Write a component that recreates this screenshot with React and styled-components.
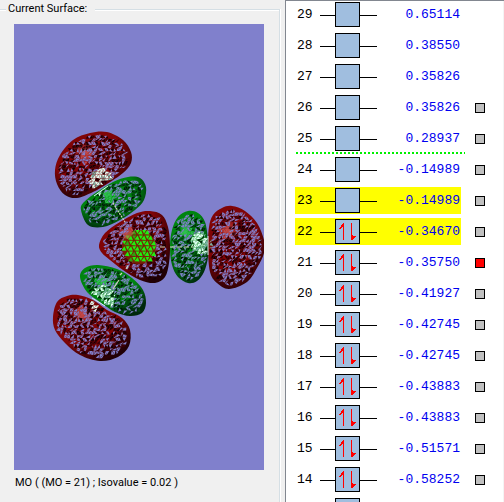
import React, { useState } from 'react'
import styled, { createGlobalStyle } from 'styled-components'

const GlobalStyle = createGlobalStyle`
  * {
    box-sizing: border-box;
  }
  body {
    margin: 0;
    background: #f0f0f0;
    font-family: Roboto, "Liberation Sans", Arial, sans-serif;
    color: #000;
  }
`

const orbitals = [
  { mo: 29, energy: '0.65114' },
  { mo: 28, energy: '0.38550' },
  { mo: 27, energy: '0.35826' },
  { mo: 26, energy: '0.35826', surface: true },
  { mo: 25, energy: '0.28937', surface: true },
  { mo: 24, energy: '-0.14989', surface: true },
  { mo: 23, energy: '-0.14989', surface: true, marked: true },
  { mo: 22, energy: '-0.34670', surface: true, marked: true, filled: true },
  { mo: 21, energy: '-0.35750', surface: true, filled: true },
  { mo: 20, energy: '-0.41927', surface: true, filled: true },
  { mo: 19, energy: '-0.42745', surface: true, filled: true },
  { mo: 18, energy: '-0.42745', surface: true, filled: true },
  { mo: 17, energy: '-0.43883', surface: true, filled: true },
  { mo: 16, energy: '-0.43883', surface: true, filled: true },
  { mo: 15, energy: '-0.51571', surface: true, filled: true },
  { mo: 14, energy: '-0.58252', surface: true, filled: true },
]

// outline points of every lobe, light is where the mesh gets bright
const lobes = [
  {
    id: 'topRed', color: 'red', light: [101, 180, 11], shine: [86, 157],
    points: [[55, 170], [60, 155], [73, 140], [90, 133], [107, 132], [123, 140], [131, 152], [131, 163], [123, 173], [107, 184], [93, 192], [77, 198], [65, 195], [57, 184]],
  },
  {
    id: 'topGreen', color: 'green', light: [98, 191, 5], shine: [109, 198],
    points: [[81, 210], [84, 202], [97, 192], [113, 182], [128, 177], [140, 178], [146, 187], [144, 200], [135, 210], [120, 220], [103, 227], [88, 225]],
  },
  {
    id: 'bottomGreen', color: 'green', light: [103, 298, 12], shine: [101, 282],
    points: [[80, 277], [85, 268], [98, 265], [117, 269], [132, 278], [143, 290], [146, 303], [142, 313], [130, 316], [115, 312], [100, 302], [87, 292]],
  },
  {
    id: 'bottomRed', color: 'red', light: [97, 305, 7], shine: [81, 312],
    points: [[53, 317], [57, 302], [67, 296], [78, 295], [93, 300], [107, 310], [122, 318], [130, 330], [129, 346], [118, 357], [100, 361], [80, 355], [65, 343], [55, 330]],
  },
  {
    id: 'rightGreen', color: 'green', light: [202, 243, 11], shine: [187, 232],
    points: [[170, 247], [172, 230], [178, 217], [188, 211], [198, 213], [205, 222], [208, 240], [208, 257], [204, 272], [197, 281], [188, 283], [178, 277], [172, 265]],
  },
  {
    id: 'rightRed', color: 'red', light: [209, 245, 5], shine: [225, 232],
    points: [[208, 247], [209, 227], [213, 215], [222, 208], [232, 206], [245, 211], [257, 223], [264, 240], [264, 253], [257, 268], [247, 282], [229, 289], [217, 283], [210, 272]],
  },
  {
    id: 'centerRed', color: 'red', light: [0, 0, 0], shine: [130, 234],
    points: [[99, 245], [105, 233], [120, 222], [137, 213], [150, 211], [162, 215], [168, 227], [170, 245], [169, 263], [165, 277], [155, 283], [140, 280], [123, 270], [110, 260], [102, 253]],
  },
]

const shades = {
  red: ['#c04848', '#800406', '#200006', '#3c0008', '#100006'],
  green: ['#30c050', '#008410', '#00280c', '#00440e', '#001408'],
}

// small seeded generator so the mesh is the same on every render
const createRandom = (seed) => () => {
  seed = (seed * 1664525 + 1013904223) % 4294967296
  return seed / 4294967296
}

const smoothPath = (points) => {
  const n = points.length
  let d = `M${points[0]}`
  for (let i = 0; i < n; i++) {
    const a = points[(i + n - 1) % n]
    const b = points[i]
    const c = points[(i + 1) % n]
    const e = points[(i + 2) % n]
    d += `C${b[0] + (c[0] - a[0]) / 6},${b[1] + (c[1] - a[1]) / 6} ${c[0] - (e[0] - b[0]) / 6},${c[1] - (e[1] - b[1]) / 6} ${c}`
  }
  return d + 'Z'
}

const isInside = (x, y, points) => {
  let inside = false
  for (let i = 0, j = points.length - 1; i < points.length; j = i++) {
    const [xi, yi] = points[i]
    const [xj, yj] = points[j]
    if (yi > y !== yj > y && x < ((xj - xi) * (y - yi)) / (yj - yi) + xi) inside = !inside
  }
  return inside
}

const buildMesh = (lobe, seed) => {
  const random = createRandom(seed)
  const [bright, , dark, mid, darkest] = shades[lobe.color]
  const xs = lobe.points.map((p) => p[0])
  const ys = lobe.points.map((p) => p[1])
  const x0 = Math.min(...xs)
  const y0 = Math.min(...ys)
  const cx = (x0 + Math.max(...xs)) / 2
  const cy = (y0 + Math.max(...ys)) / 2
  const step = 3.3
  const cols = Math.ceil((Math.max(...xs) - x0) / step) + 2
  const rows = Math.ceil((Math.max(...ys) - y0) / step) + 2
  const grid = []
  for (let r = 0; r <= rows; r++) {
    grid.push([])
    for (let c = 0; c <= cols; c++) {
      grid[r].push([
        x0 + (c + (r % 2) / 2 - 1) * step + (random() - 0.5) * 1.8,
        y0 + (r - 1) * step + (random() - 0.5) * 1.8,
      ])
    }
  }
  const triangles = []
  for (let r = 0; r < rows; r++) {
    for (let c = 0; c < cols; c++) {
      const pairs = [
        [grid[r][c], grid[r][c + 1], grid[r + 1][c]],
        [grid[r][c + 1], grid[r + 1][c + 1], grid[r + 1][c]],
      ]
      pairs.forEach((tri) => {
        const mx = (tri[0][0] + tri[1][0] + tri[2][0]) / 3
        const my = (tri[0][1] + tri[1][1] + tri[2][1]) / 3
        const pick = random()
        // keep a solid rim round the lobe
        const ex = cx + (mx - cx) * 1.1
        const ey = cy + (my - cy) * 1.1
        if (!isInside(ex, ey, lobe.points)) return
        const [lx, ly, lr] = lobe.light
        const lit = Math.hypot(mx - lx, my - ly) < lr
        const shiny = Math.hypot(mx - lobe.shine[0], my - lobe.shine[1]) < 6
        let fill = pick < 0.48 ? '#8080cc' : pick < 0.66 ? dark : pick < 0.8 ? darkest : pick < 0.92 ? mid : null
        if (shiny && pick > 0.4) fill = bright
        if (lit) fill = pick < 0.6 ? '#e0fff4' : pick < 0.8 ? '#78b0a4' : dark
        if (!fill) return
        const size = lit ? 0.9 : 0.84
        const points = tri
          .map(([x, y]) => `${(mx + (x - mx) * size).toFixed(1)},${(my + (y - my) * size).toFixed(1)}`)
          .join(' ')
        triangles.push({ points, fill })
      })
    }
  }
  return triangles
}

const meshes = lobes.map((lobe, index) => ({
  ...lobe,
  outline: smoothPath(lobe.points),
  triangles: buildMesh(lobe, 41 + index * 97),
}))

const coreTriangles = []
for (let r = 0; r < 7; r++) {
  for (let c = 0; c < 7; c++) {
    const x = 118 + c * 6.6 + (r % 2) * 3.3
    const y = 230 + r * 5.4
    if (Math.hypot(x + 2.5 - 139, y + 2 - 247) < 17) coreTriangles.push(`${x},${y + 4.2} ${x + 5},${y + 4.6} ${x + 3.2},${y}`)
    if (Math.hypot(x + 6 - 139, y + 2 - 247) < 16) coreTriangles.push(`${x + 4.4},${y} ${x + 8.4},${y} ${x + 6.2},${y + 3.8}`)
  }
}

function Surface() {
  return (
    <Viewport viewBox="14 24 250 446" role="img" aria-label="Molecular orbital 21">
      <defs>
        {Object.entries(shades).map(([name, [bright, base, dark]]) => (
          <radialGradient key={name} id={`${name}Shade`} cx="0.38" cy="0.3" r="0.75">
            <stop offset="0" stopColor={bright} />
            <stop offset="0.2" stopColor={base} />
            <stop offset="0.6" stopColor={base} />
            <stop offset="1" stopColor={dark} />
          </radialGradient>
        ))}
      </defs>
      {meshes.map((lobe) => (
        <g key={lobe.id}>
          <path d={lobe.outline} fill={`url(#${lobe.color}Shade)`} />
          {lobe.triangles.map((tri, i) => (
            <polygon key={i} points={tri.points} fill={tri.fill} />
          ))}
        </g>
      ))}
      <circle cx="139" cy="247" r="17" fill="#782008" />
      {coreTriangles.map((points, i) => (
        <polygon key={i} points={points} fill={i % 7 === 0 ? '#30a010' : '#20f010'} />
      ))}
      <path d="M123 238l7-6 5 0-7 7z" fill="#c07050" opacity="0.6" />
      <g fill="none" stroke="#d0d8b8" strokeWidth="1.2">
        <path d="M113 203L125 222" strokeDasharray="2 1" />
        <path d="M160 247H166M170 247H193" strokeDasharray="5 2" />
        <path d="M128 266L126 269M122 273L120 275M119 280L113 289" />
      </g>
      <path d="M94 196L108 186M92 298L105 306M208 236V255" stroke="#d8f4f0" fill="none" />
    </Viewport>
  )
}

function Electrons() {
  return (
    <svg width="23" height="23" viewBox="0 0 23 23" aria-hidden="true" shapeRendering="crispEdges">
      <path d="M7 3h1v17h-1zM15 3h1v17h-1z" fill="#f00" />
      <path d="M8 3v4H6v1H5v1H3V8h1V7h1V5h1V4h1V3zM16 15h1v1h3v1h-1v1h-1v1h-1v1h-1z" fill="#f00" />
    </svg>
  )
}

function App() {
  const [selected, setSelected] = useState([21])

  const toggle = (mo) => {
    setSelected(selected.includes(mo) ? selected.filter((item) => item !== mo) : [...selected, mo])
  }

  return (
    <Window>
      <GlobalStyle />
      <SurfacePanel>
        <SurfaceGroup>
          <legend>Current Surface:</legend>
          <Surface />
          <Caption>MO ( (MO = 21) ; Isovalue = 0.02 )</Caption>
        </SurfaceGroup>
      </SurfacePanel>
      <Levels>
        {orbitals.map((orbital) => (
          <React.Fragment key={orbital.mo}>
            <Level $tight={orbital.mo === 25}>
              <LevelLabel htmlFor={`mo-${orbital.mo}`} $marked={orbital.marked}>
                <Index>{orbital.mo}</Index>
                <Wire />
                <Slot>{orbital.filled && <Electrons />}</Slot>
                <Wire $long />
                <Energy>{orbital.energy}</Energy>
              </LevelLabel>
              {orbital.surface && (
                <Check
                  id={`mo-${orbital.mo}`}
                  type="checkbox"
                  checked={selected.includes(orbital.mo)}
                  onChange={() => toggle(orbital.mo)}
                />
              )}
            </Level>
            {orbital.mo === 25 && <Divider aria-hidden="true" />}
          </React.Fragment>
        ))}
        <NextLevel aria-hidden="true">
          <Slot />
        </NextLevel>
      </Levels>
    </Window>
  )
}

export default App

const Window = styled.div`
  display: grid;
  grid-template-columns: 285fr 219fr;
  grid-template-rows: 100%;
  height: 100vh;
  overflow: hidden;
`

const SurfacePanel = styled.div`
  min-width: 0;
  padding-right: 5px;
`

const SurfaceGroup = styled.fieldset`
  height: 120%;
  min-width: 0;
  margin: 0;
  padding: 8px 15px 0 14px;
  border: 1px solid #d5dfe5;
  border-left: 0;
  box-shadow: 1px 0 #fff, inset 0 1px #fff;

  legend {
    margin-left: -8px;
    padding: 0 8px 0 2px;
    background: #f0f0f0;
    font-size: 11px;
    line-height: 18px;
  }
`

const Viewport = styled.svg`
  display: block;
  width: 100%;
  margin-top: -2px;
  background: #8080cc;
`

const Caption = styled.p`
  margin: 4px 0 0;
  padding-left: 1px;
  font-size: 11px;
  line-height: 18px;
  white-space: nowrap;
`

const Levels = styled.ul`
  min-width: 0;
  margin: 0;
  padding: 0 0 0 9px;
  overflow: hidden;
  list-style: none;
  background: #fff;
  border: solid #828790;
  border-width: 1px 0 0 1px;
  box-shadow: inset -1px 0 #f4f4f4;
`

const Level = styled.li`
  display: flex;
  align-items: center;
  height: 27px;
  margin-bottom: ${props => props.$tight ? '0' : '4px'};
`

// scrolled in only by its top edge
const NextLevel = styled.li`
  padding: 1px 0 0 40px;
`

const LevelLabel = styled.label`
  display: flex;
  align-items: center;
  width: 166px;
  height: 27px;
  padding: 0 1px 0 2px;
  background: ${props => props.$marked ? '#ff0' : 'transparent'};
  font-family: "Liberation Mono", "Courier New", monospace;
  font-size: 13px;
  line-height: 27px;
`

const Index = styled.span`
  width: 23px;
`

const Wire = styled.span`
  width: ${props => props.$long ? '17px' : '15px'};
  height: 3px;
  border-bottom: 1px solid #000;
`

const Slot = styled.span`
  display: flex;
  width: 25px;
  height: 25px;
  border: 1px solid #000;
  background: #a0bedf;
`

const Energy = styled.span`
  flex: 1;
  color: #0000f0;
  text-align: right;
`

const Check = styled.input`
  appearance: none;
  width: 10px;
  height: 10px;
  margin: 0 0 0 14px;
  border: 1px solid #000;
  background: #c0c0c0;

  &:checked {
    background: #f00;
  }
`

const Divider = styled.li`
  width: 169px;
  height: 2px;
  margin: 0 0 2px 1px;
  background: repeating-linear-gradient(90deg, #00f000 0 2px, transparent 2px 4px);
`
